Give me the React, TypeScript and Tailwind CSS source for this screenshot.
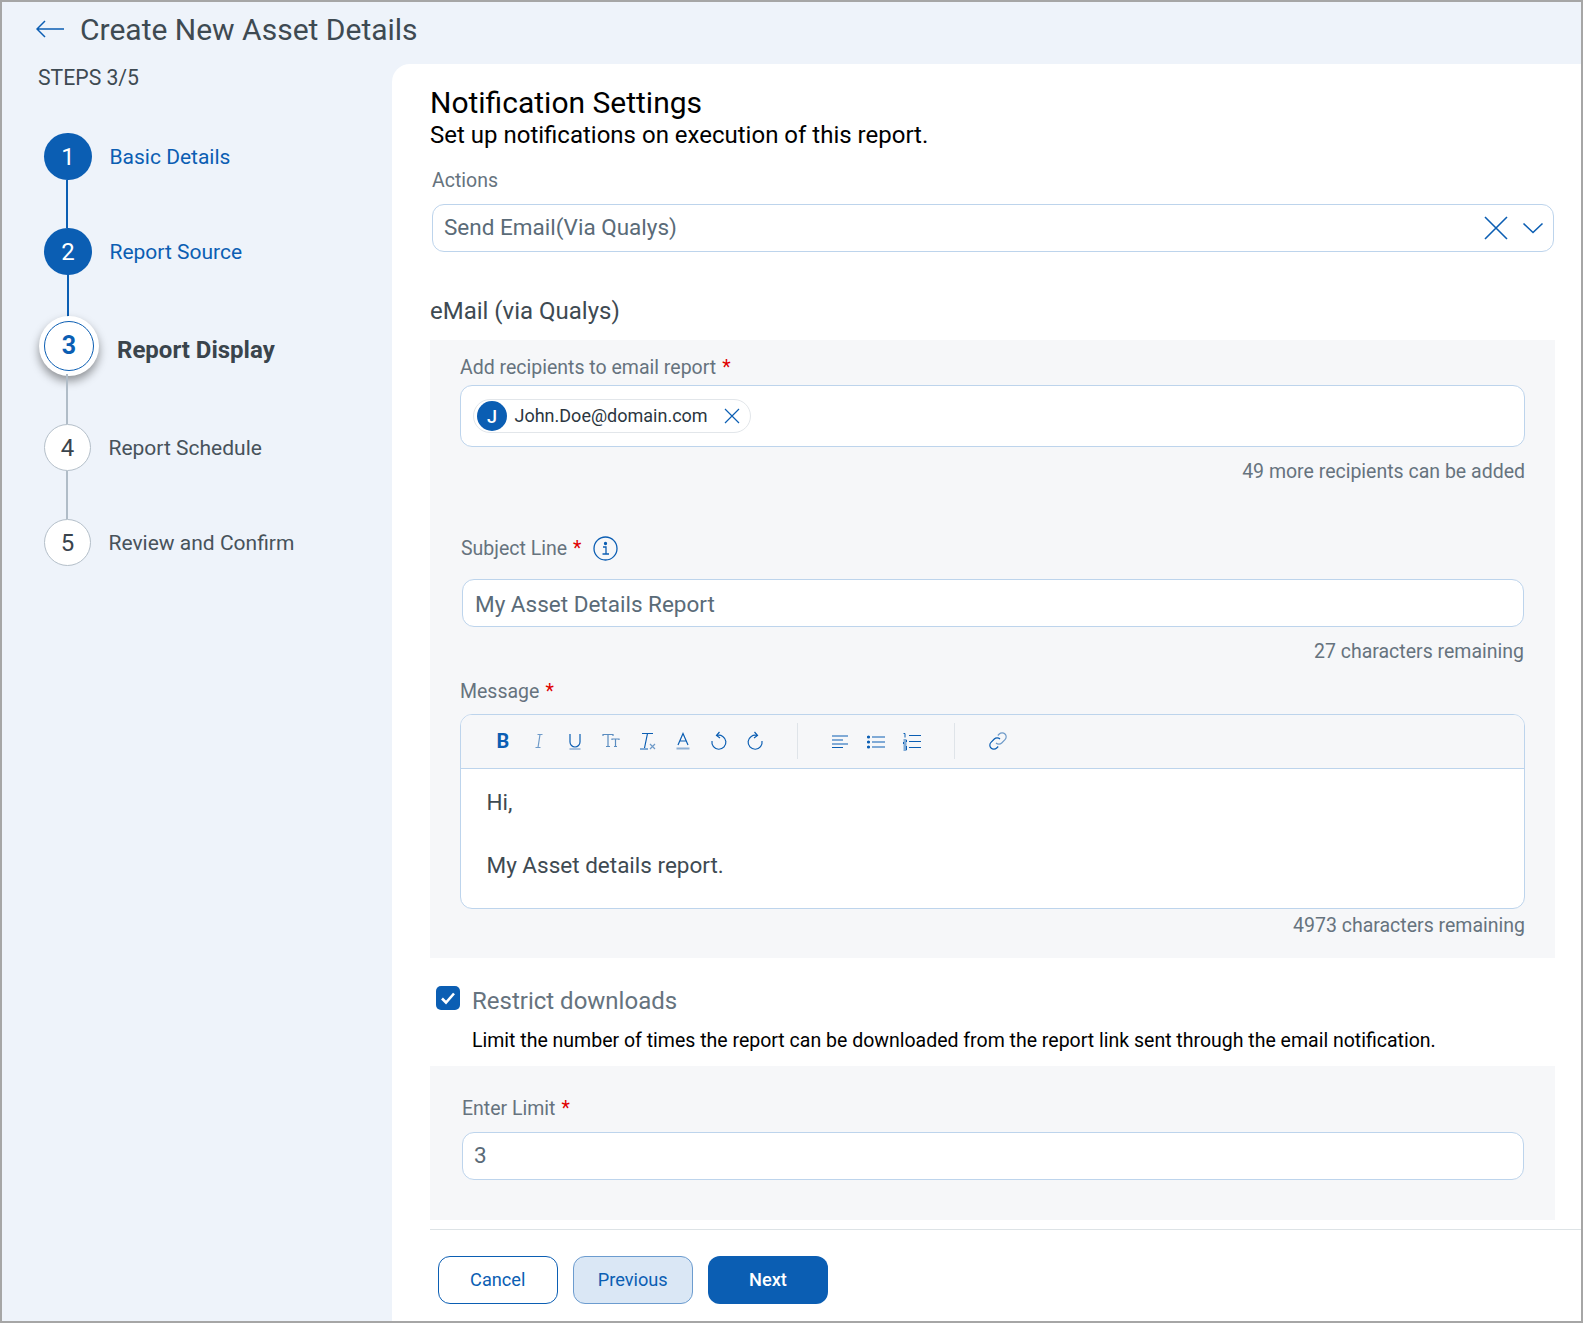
import type { ReactNode } from 'react';

const ink = '#0b5eb3';

const steps = [
  { n: 1, label: 'Basic Details', state: 'done', line: 'ml-[22px] h-[48px] w-[2px] bg-[#0b5eb3]' },
  { n: 2, label: 'Report Source', state: 'done', line: 'ml-[23px] h-[42px] w-[2px] bg-[#0b5eb3]' },
  { n: 3, label: 'Report Display', state: 'active', line: 'ml-[22px] h-[50px] w-[2px] bg-[#b0bcc7]' },
  { n: 4, label: 'Report Schedule', state: 'todo', line: 'ml-[22px] h-[48px] w-[2px] bg-[#b0bcc7]' },
  { n: 5, label: 'Review and Confirm', state: 'todo', line: '' },
];

function Stepper() {
  return (
    <div className="mt-[41px] flex flex-col">
      {steps.map((s) => (
        <div key={s.n} className="flex flex-col">
          {s.state === 'active' ? (
            <div className="-ml-[5px] flex h-[57px] items-center">
              <div className="flex h-[60px] w-[60px] items-center justify-center rounded-full bg-white shadow-[0_5px_10px_rgba(0,0,0,0.4)]">
                <div className="flex h-[50px] w-[50px] items-center justify-center rounded-full border border-[#0b5eb3] text-[25px] font-bold text-[#0b5eb3]">
                  {s.n}
                </div>
              </div>
              <span className="mt-[9px] ml-[18px] text-[24px] font-bold text-[#3a444c]">{s.label}</span>
            </div>
          ) : (
            <div className="flex h-[47px] items-center">
              <div
                className={
                  s.state === 'done'
                    ? 'flex h-[47px] w-[48px] items-center justify-center rounded-full bg-[#0b5eb3] text-[24px] text-white'
                    : 'flex h-[47px] w-[47px] items-center justify-center rounded-full border border-[#b4bfc9] bg-white text-[24px] text-[#3a444c]'
                }
              >
                {s.n}
              </div>
              <span
                className={
                  s.state === 'done'
                    ? 'mt-[2px] ml-[17.5px] text-[21px] text-[#0b5eb3]'
                    : 'mt-[2px] ml-[17.5px] text-[21px] text-[#47525b]'
                }
              >
                {s.label}
              </span>
            </div>
          )}
          {s.line && <div className={s.line} />}
        </div>
      ))}
    </div>
  );
}

function Req() {
  return <span className="ml-[6px] text-[#e00000]">*</span>;
}

function Input({ value, drop }: { value: string; drop?: boolean }) {
  return (
    <div
      className={
        drop
          ? 'flex h-[48px] items-center rounded-[12px] border border-[#bdd4ec] bg-white pt-[3px] pl-[12px] text-[22.5px] text-[#5a6b78]'
          : 'flex h-[48px] items-center rounded-[12px] border border-[#bdd4ec] bg-white pl-[11px] text-[22.5px] text-[#5a6b78]'
      }
    >
      {value}
    </div>
  );
}

function Hint({ children }: { children: ReactNode }) {
  return <div className="text-right text-[19.5px] leading-[24px] text-[#66737e]">{children}</div>;
}

function Icon({ children }: { children: ReactNode }) {
  return (
    <svg width="24" height="24" viewBox="0 0 24 24" fill="none" stroke={ink} strokeWidth="1.2">
      {children}
    </svg>
  );
}

function Tool({ children }: { children: ReactNode }) {
  return <div className="flex w-[36px] justify-center">{children}</div>;
}

function Toolbar() {
  return (
    <div className="flex h-[54px] items-center border-b border-[#bdd4ec] pb-[2px] pl-[24px]">
      <Tool>
        <span className="text-[20px] font-bold text-[#0b5eb3]">B</span>
      </Tool>
      <Tool>
        <Icon>
          <path d="M10.5 5.5h5M8.5 18.5h5M13 5.5l-2 13" stroke="#6f9bc9" />
        </Icon>
      </Tool>
      <Tool>
        <Icon>
          <path d="M7 5v8a5 5 0 0 0 10 0V5" />
          <path d="M6.500 20h11" stroke="#8fb0d4" strokeWidth="1.6" />
        </Icon>
      </Tool>
      <Tool>
        <Icon>
          <path d="M4 7V5.500h10V7M9 5.500v12M7 17.500h4M13 11v-1h7v1M16.500 10v7.500M15 17.500h3" stroke="#5a8cc0" />
        </Icon>
      </Tool>
      <Tool>
        <Icon>
          <path d="M7 4.500h11M12.500 4.500L9.500 19M5 20h8" />
          <path d="M15 15l5 5M20 15l-5 5" stroke="#6f9bc9" />
        </Icon>
      </Tool>
      <Tool>
        <Icon>
          <path d="M7 16L12 4.500L17 16M8.700 12h6.600" />
          <path d="M5.500 19.500h13" stroke="#8fb0d4" strokeWidth="2" />
        </Icon>
      </Tool>
      <Tool>
        <Icon>
          <path d="M10 6.500a7 7 0 1 1-5 5.500" />
          <path d="M12.500 3L9.500 6.500l3.500 2.500" />
        </Icon>
      </Tool>
      <Tool>
        <Icon>
          <path d="M14 6.500a7 7 0 1 0 5 5.500" />
          <path d="M11.500 3l3 3.500L11 9" />
        </Icon>
      </Tool>
      <div className="mr-[24.500px] ml-[23.500px] h-[36px] w-px bg-[#dfe4e9]" />
      <Tool>
        <Icon>
          <path d="M4 7h16M4 11h11M4 15h16M4 18.500h11" />
        </Icon>
      </Tool>
      <Tool>
        <Icon>
          <path d="M8 8h13M8 13h13M8 18h13" />
          <circle cx="4.500" cy="8" r="1" fill={ink} />
          <circle cx="4.500" cy="13" r="1" fill={ink} />
          <circle cx="4.500" cy="18" r="1" fill={ink} />
        </Icon>
      </Tool>
      <Tool>
        <Icon>
          <path d="M9 6.500h12M9 12.500h12M9 18.500h12" />
          <path d="M3.500 4.500h1.500v4M3.500 11h3v2h-3v2h3M3.500 17h3v4h-3M3.500 19h3" strokeWidth="1" />
        </Icon>
      </Tool>
      <div className="mr-[25px] ml-[24px] h-[36px] w-px bg-[#dfe4e9]" />
      <Tool>
        <Icon>
          <path d="M10 14a4 4 0 0 0 5.700 0l3.300-3.300A4 4 0 0 0 13.300 5l-1.500 1.500" stroke="#6f9bc9" />
          <path d="M14 10a4 4 0 0 0-5.700 0L5 13.300A4 4 0 0 0 10.700 19l1.500-1.500" />
        </Icon>
      </Tool>
    </div>
  );
}

export default function App() {
  return (
    <div className="flex h-[1323px] w-[1583px] flex-col overflow-hidden border-2 border-[#a6a6a6] bg-[#eef3fa] font-['Roboto',sans-serif]">
      <header className="flex h-[62px] shrink-0 items-center pb-[8px] pl-[34px]">
        <svg width="28" height="18" viewBox="0 0 28 18" fill="none" stroke={ink} strokeWidth="1.5">
          <path d="M28 9H1M9 1L1 9l8 8" />
        </svg>
        <h1 className="ml-[16px] text-[30px] font-normal text-[#3e4a52]">Create New Asset Details</h1>
      </header>
      <div className="flex min-h-0 flex-1">
        <aside className="w-[390px] shrink-0 pl-[42px]">
          <div className="-ml-[6px] text-[21.2px] leading-[28px] text-[#3e4a52]">STEPS 3/5</div>
          <Stepper />
        </aside>
        <main className="flex min-w-0 flex-1 flex-col rounded-tl-[18px] bg-white pt-[22px] pl-[38px]">
          <h2 className="text-[30px] leading-[34px] font-normal text-black">Notification Settings</h2>
          <p className="text-[24px] leading-[30px] text-black">Set up notifications on execution of this report.</p>
          <div className="mt-[18px] mr-[27px] ml-[2px]">
            <div className="text-[19.5px] leading-[26px] text-[#66737e]">Actions</div>
            <div className="mt-[10px] flex h-[48px] items-center justify-between rounded-[12px] border border-[#bdd4ec] pr-[9px] pl-[11px] text-[22.5px] text-[#5a6b78]">
              <span>Send Email(Via Qualys)</span>
              <span className="flex items-center gap-[14px]">
                <svg width="24" height="24" viewBox="0 0 24 24" fill="none" stroke={ink} strokeWidth="1.6">
                  <path d="M1 1l22 22M23 1L1 23" />
                </svg>
                <svg width="22" height="12" viewBox="0 0 22 12" fill="none" stroke={ink} strokeWidth="1.6">
                  <path d="M1.500 1.500L11 10.500l9.500-9" />
                </svg>
              </span>
            </div>
          </div>
          <h3 className="mt-[44px] text-[24px] leading-[30px] font-normal text-[#3e4a52]">eMail (via Qualys)</h3>
          <section className="mt-[14px] mr-[26px] h-[618px] bg-[#f6f7f9] pt-[15px] pr-[30px] pl-[30px]">
            <div className="text-[19.5px] leading-[26px] text-[#66737e]">
              Add recipients to email report
              <Req />
            </div>
            <div className="mt-[4px] flex h-[62px] items-center rounded-[12px] border border-[#bdd4ec] bg-white pl-[12px]">
              <div className="flex h-[34px] items-center rounded-full border border-[#e2e6ea] pr-[10px] pl-[3px]">
                <span className="flex h-[30px] w-[30px] items-center justify-center rounded-full bg-[#0b5eb3] text-[18px] font-medium text-white">
                  J
                </span>
                <span className="-mt-[2px] ml-[7.500px] text-[18px] text-[#2b3640]">John.Doe@domain.com</span>
                <svg className="ml-[16.500px]" width="16" height="16" viewBox="0 0 16 16" fill="none" stroke={ink} strokeWidth="1.2">
                  <path d="M1 1l14 14M15 1L1 15" />
                </svg>
              </div>
            </div>
            <div className="mt-[13px]">
              <Hint>49 more recipients can be added</Hint>
            </div>
            <div className="mt-[52px] ml-px flex items-center text-[19.5px] leading-[26px] text-[#66737e]">
              Subject Line
              <Req />
              <svg className="-mt-[2px] ml-[12px]" width="25" height="25" viewBox="0 0 25 25" fill="none" stroke={ink} strokeWidth="1.3">
                <circle cx="12.500" cy="12.500" r="11.500" />
                <path d="M10 11h3v7M9.500 18h6.500" />
                <circle cx="12.500" cy="7.500" r="1" fill={ink} />
              </svg>
            </div>
            <div className="mt-[17px] mr-px ml-[2px]">
              <Input value="My Asset Details Report" drop />
            </div>
            <div className="mt-[13px] mr-px">
              <Hint>27 characters remaining</Hint>
            </div>
            <div className="mt-[15px] text-[19.5px] leading-[26px] text-[#66737e]">
              Message
              <Req />
            </div>
            <div className="mt-[9px] h-[195px] overflow-hidden rounded-[12px] border border-[#bdd4ec] bg-white">
              <div className="bg-[#f6f7f9]">
                <Toolbar />
              </div>
              <div className="pt-[17px] pl-[25.500px] text-[22.5px] leading-[32px] text-[#3e4a52]">
                <div>Hi,</div>
                <div className="mt-[31px]">My Asset details report.</div>
              </div>
            </div>
            <div className="mt-[5px]">
              <Hint>4973 characters remaining</Hint>
            </div>
          </section>
          <div className="mt-[28px] flex items-start pl-[6px]">
            <span className="flex h-[24px] w-[24px] items-center justify-center rounded-[5px] bg-[#0b5eb3]">
              <svg width="16" height="14" viewBox="0 0 16 14" fill="none" stroke="#fff" strokeWidth="2.6">
                <path d="M2 7.500l4 4L14 2.500" />
              </svg>
            </span>
            <span className="ml-[12px] text-[24px] leading-[30px] text-[#66737e]">Restrict downloads</span>
          </div>
          <p className="mt-[12px] ml-[42px] text-[19.5px] leading-[26px] text-black">
            Limit the number of times the report can be downloaded from the report link sent through the email notification.
          </p>
          <section className="mt-[12px] mr-[26px] h-[154px] bg-[#f6f7f9] pt-[30px] pr-[31px] pl-[32px]">
            <div className="text-[19.5px] leading-[26px] text-[#66737e]">
              Enter Limit
              <Req />
            </div>
            <div className="mt-[10px]">
              <Input value="3" />
            </div>
          </section>
          <div className="mt-[9px] flex-1 border-t border-[#dde3e6] pt-[26px] pl-[8px]">
            <div className="flex gap-[15.500px]">
              <button className="h-[48px] w-[119.500px] rounded-[12px] border border-[#0b5eb3] bg-white text-[18.2px] text-[#0b5eb3]">
                Cancel
              </button>
              <button className="h-[48px] w-[119.500px] rounded-[12px] border border-[#6c9ccf] bg-[#dae7f5] text-[18.2px] text-[#0b5eb3]">
                Previous
              </button>
              <button className="h-[48px] w-[120px] rounded-[12px] bg-[#0b5eb3] text-[18.2px] font-medium text-white">
                Next
              </button>
            </div>
          </div>
        </main>
      </div>
    </div>
  );
}
